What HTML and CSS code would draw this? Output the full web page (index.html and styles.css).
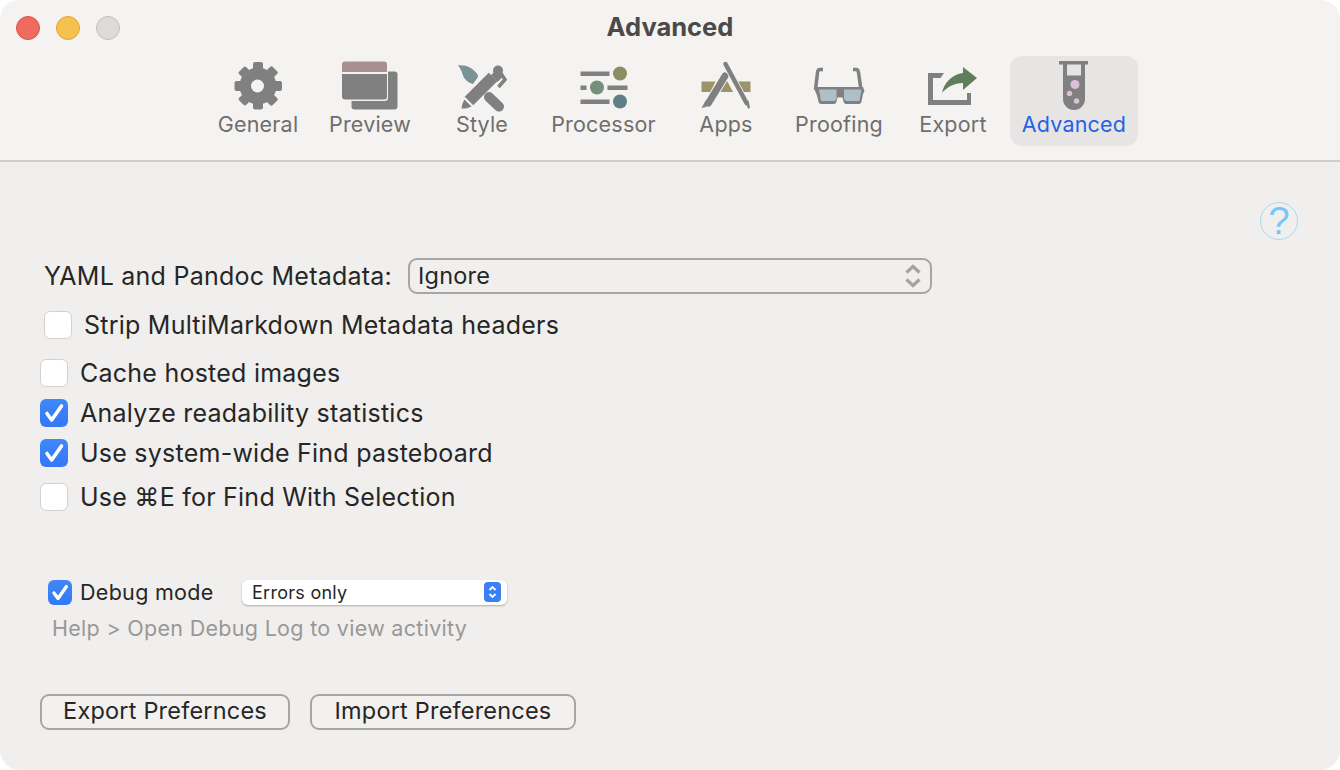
FILE: index.html
```html
<!DOCTYPE html>
<html lang="en">
<head>
<meta charset="utf-8">
<title>Advanced</title>
<link rel="stylesheet" href="styles.css">
</head>
<body>
<div class="window">
  <header class="toolbar">
    <div class="titlebar">
      <div class="lights">
        <span class="light red"></span><span class="light yellow"></span><span class="light grey"></span>
      </div>
      <h1 class="title">Advanced</h1>
    </div>
    <nav class="tabs">
      <div class="tab w110">
        <svg class="icon" width="60" height="56" viewBox="228 58 60 56">
          <g fill="#808080">
            <rect x="253" y="62" width="10" height="47.500" rx="2"/>
            <rect x="253" y="62" width="10" height="47.500" rx="2" transform="rotate(45 258 86)"/>
            <rect x="253" y="62" width="10" height="47.500" rx="2" transform="rotate(90 258 86)"/>
            <rect x="253" y="62" width="10" height="47.500" rx="2" transform="rotate(135 258 86)"/>
            <circle cx="258" cy="86" r="18.500"/>
          </g>
          <circle cx="257.500" cy="86" r="6.500" fill="#f4f3f1"/>
        </svg>
        <span class="tab-label">General</span>
      </div>
      <div class="tab w114">
        <svg class="icon" width="60" height="56" viewBox="340 58 60 56">
          <rect x="351.500" y="71.500" width="46" height="38" rx="3" fill="#808080"/>
          <rect x="340.500" y="60.500" width="47.500" height="40.500" rx="3.500" fill="#f4f3f1"/>
          <path d="M342 72V64.500a3 3 0 0 1 3-3h39a3 3 0 0 1 3 3V72z" fill="#a89090"/>
          <path d="M342 74h45v22.500a3 3 0 0 1-3 3H345a3 3 0 0 1-3-3z" fill="#808080"/>
        </svg>
        <span class="tab-label">Preview</span>
      </div>
      <div class="tab w110">
        <svg class="icon" width="60" height="56" viewBox="452 58 60 56">
          <path d="M458 65c3 .8 6 0 9 1.200 4 1.600 7 3.800 9 6.300 1.500 1.800 2.300 3.300 2 4.500l-5 7c-3 -.8-6-2.300-8-5-2-2.500-2.300-4.500-3-6.500-.8-2.500-2.300-4.500-4-7.500z" fill="#7d9298"/>
          <path d="M489 97l10 9.500" stroke="#808080" stroke-width="10" stroke-linecap="round"/>
          <path d="M469 101l24-24" stroke="#808080" stroke-width="12"/>
          <path d="M461.500 108.500c.3-3.500 1.700-7 3-9l7 7c-2.800 1.500-6.500 2.300-10 2z" fill="#808080"/>
          <circle cx="498" cy="70.500" r="5" fill="#808080"/>
          <path d="M500 72l5 7.500-6.500 7.500" fill="none" stroke="#808080" stroke-width="3.500"/>
          <path d="M491 75l6-5.500 6.500 6.500-6 6z" fill="#808080"/>
        </svg>
        <span class="tab-label">Style</span>
      </div>
      <div class="tab w133">
        <svg class="icon" width="60" height="56" viewBox="574 58 60 56">
          <g fill="#808080">
            <rect x="580.500" y="71.500" width="29" height="4.500"/>
            <rect x="580.500" y="85.500" width="6" height="4.500"/>
            <rect x="607.500" y="85.500" width="20" height="4.500"/>
            <rect x="580.500" y="99.500" width="29" height="4.500"/>
          </g>
          <circle cx="620" cy="73.500" r="7" fill="#8a8f62"/>
          <circle cx="597" cy="87.500" r="7" fill="#74907a"/>
          <circle cx="620" cy="101.500" r="7" fill="#5f7f86"/>
        </svg>
        <span class="tab-label">Processor</span>
      </div>
      <div class="tab w112">
        <svg class="icon" width="60" height="56" viewBox="696 58 60 56">
          <path d="M701.500 81.500h14l-5 10.500h-9z" fill="#9a9468"/>
          <path d="M725.500 81.500h2l5.500 10.500h-13z" fill="#9a9468"/>
          <path d="M736 81.500h14.500V92H741z" fill="#9a9468"/>
          <path d="M725 76l-16.500 27" stroke="#f4f3f1" stroke-width="9" stroke-linecap="round"/>
          <path d="M725 76l-16.500 27" stroke="#808080" stroke-width="7" stroke-linecap="round"/>
          <path d="M725.500 64l21 39" stroke="#f4f3f1" stroke-width="6" stroke-linecap="round"/>
          <path d="M725.500 64l21 39" stroke="#808080" stroke-width="4.500" stroke-linecap="round"/>
          <path d="M706 100l5 3-5 4-4.500 1z" fill="#808080"/>
          <path d="M744.500 102l4-1.500 1.500 7-1.500 1.500z" fill="#808080"/>
        </svg>
        <span class="tab-label">Apps</span>
      </div>
      <div class="tab w114">
        <svg class="icon" width="60" height="56" viewBox="810 58 60 56">
          <path d="M824 69.500h-3c-1.500 0-2.200 1-2.500 3L816.500 90" fill="none" stroke="#808080" stroke-width="3.500"/>
          <path d="M854 69.500h3c1.500 0 2.200 1 2.500 3l2.500 17.500" fill="none" stroke="#808080" stroke-width="3.500"/>
          <path d="M817 87h47l1.500 4-1.500 3-1.500 7.500c-.3 1.500-1 2.500-2.500 2.500h-13c-1.500 0-2-1-2.500-2.500l-1-4h-5l-1 4c-.5 1.500-1 2.500-2.500 2.500h-13c-1.500 0-2.200-1-2.500-2.500L817.500 94l-1.500-3z" fill="#808080"/>
          <path d="M820 89.500h17.500v9.500l-2 2h-13.500zM845 89.500h17.500l-2 11.500h-13.500l-2-2z" fill="#aebfc7"/>
        </svg>
        <span class="tab-label">Proofing</span>
      </div>
      <div class="tab w114">
        <svg class="icon" width="60" height="56" viewBox="923 58 60 56">
          <path d="M928 73h16l-3.500 5H933v22h34v-7h4v12h-43z" fill="#808080"/>
          <path d="M942 93c2-10 10-19 21-20V67l14 11-14 12v-7c-9 .3-16 4-21 10z" fill="#5f7f5c"/>
        </svg>
        <span class="tab-label">Export</span>
      </div>
      <div class="tab w128 active">
        <svg class="icon" width="60" height="56" viewBox="1044 58 60 56">
          <path d="M1059 61h29v3.500h-3V99a11 11 0 0 1-22 0V64.500h-4z" fill="#808080"/>
          <rect x="1067" y="64.500" width="14" height="11" fill="#e6e5e3"/>
          <circle cx="1075" cy="84.500" r="4.500" fill="#dcbedb"/>
          <circle cx="1069.500" cy="93.500" r="2.700" fill="#dcbedb"/>
          <circle cx="1076.500" cy="101" r="2.800" fill="#dcbedb"/>
        </svg>
        <span class="tab-label">Advanced</span>
      </div>
    </nav>
  </header>
  <main class="content">
    <div class="help-row"><span class="help">?</span></div>
    <div class="yaml-row">
      <span class="label">YAML and Pandoc Metadata:</span>
      <div class="select">
        <span>Ignore</span>
        <svg width="16" height="24" viewBox="0 0 16 24"><path d="M1.500 8.500L8 2.500l6.500 6M1.500 15.500L8 21.500l6.500-6" fill="none" stroke="#a5a3a1" stroke-width="3.200"/></svg>
      </div>
    </div>
    <div class="check-row strip"><span class="box"></span><span class="label">Strip MultiMarkdown Metadata headers</span></div>
    <div class="check-row cache"><span class="box"></span><span class="label">Cache hosted images</span></div>
    <div class="check-row analyze"><span class="box on"><svg width="28" height="28" viewBox="0 0 28 28"><path d="M7 14.500L11.700 21 21.500 7" fill="none" stroke="#fff" stroke-width="3.600" stroke-linecap="round" stroke-linejoin="round"/></svg></span><span class="label">Analyze readability statistics</span></div>
    <div class="check-row find"><span class="box on"><svg width="28" height="28" viewBox="0 0 28 28"><path d="M7 14.500L11.700 21 21.500 7" fill="none" stroke="#fff" stroke-width="3.600" stroke-linecap="round" stroke-linejoin="round"/></svg></span><span class="label">Use system-wide Find pasteboard</span></div>
    <div class="check-row cmd"><span class="box"></span><span class="label">Use ⌘E for Find With Selection</span></div>
    <div class="debug-row">
      <span class="box on small"><svg width="24" height="25" viewBox="0 0 28 28"><path d="M7 14.500L11.700 21 21.500 7" fill="none" stroke="#fff" stroke-width="3.800" stroke-linecap="round" stroke-linejoin="round"/></svg></span>
      <span class="debug-label">Debug mode</span>
      <div class="popup">
        <span>Errors only</span>
        <span class="stepper"><svg width="17" height="20" viewBox="0 0 17 20"><path d="M5.500 8l3-3 3 3M5.500 12l3 3 3-3" fill="none" stroke="#fff" stroke-width="1.800"/></svg></span>
      </div>
    </div>
    <p class="hint">Help &gt; Open Debug Log to view activity</p>
    <div class="buttons">
      <button class="btn export" type="button">Export Prefernces</button>
      <button class="btn import" type="button">Import Preferences</button>
    </div>
  </main>
</div>
</body>
</html>
```
FILE: styles.css
```css
* { box-sizing: border-box; }
html, body { margin: 0; height: 100%; background: #fff; }
body { width: 1340px; height: 770px; overflow: hidden; font-family: "Inter", "DejaVu Sans", sans-serif; color: #262626; }
.window { width: 1340px; height: 770px; border-radius: 20px; overflow: hidden; background: #f0efed; display: flex; flex-direction: column; }

.toolbar { height: 162px; flex: none; background: #f4f3f1; border-bottom: 2px solid #cfcecc; display: flex; flex-direction: column; }
.titlebar { height: 56px; flex: none; display: flex; align-items: center; padding: 0 16px 0 16px; position: relative; }
.lights { display: flex; gap: 16px; }
.light { width: 24px; height: 24px; border-radius: 50%; border: 1px solid; }
.red { background: #f06a5f; border-color: #d9534a; }
.yellow { background: #f6c04e; border-color: #dfa33a; }
.grey { background: #dcdbd9; border-color: #c0bfbd; }
.title { position: absolute; left: 0; right: 0; top: 12px; margin: 0; text-align: center; font-size: 25.500px; line-height: 30px; font-weight: 700; color: #4b4a49; }

.tabs { display: flex; justify-content: center; padding-left: 1px; }
.tab { height: 90px; display: flex; flex-direction: column; align-items: center; padding-top: 2px; border-radius: 12px; }
.w110 { width: 110px; }
.w112 { width: 112px; }
.w114 { width: 114px; }
.w128 { width: 128px; }
.w133 { width: 133px; }
.icon { display: block; flex: none; }
.tab-label { font-size: 21.500px; line-height: 26px; letter-spacing: .2px; color: #6f6e6d; margin-top: -3px; white-space: nowrap; }
.active { background: #e6e5e3; }
.active .tab-label { color: #2461e6; }

.content { flex: 1; display: flex; flex-direction: column; padding: 0 0 0 40px; }
.help-row { display: flex; justify-content: flex-end; padding: 40px 42px 0 0; }
.help { width: 38px; height: 38px; border-radius: 50%; border: 1px solid #a6d9f8; color: #76c6fb; font-family: "Liberation Sans", sans-serif; font-size: 38px; line-height: 36px; text-align: center; }
.label { font-size: 25px; line-height: 30px; letter-spacing: .24px; color: #262626; white-space: nowrap; }

.yaml-row { display: flex; align-items: center; gap: 16px; margin: 18px 0 0 4px; height: 36px; }
.select { width: 524px; height: 36px; border: 2px solid #a8a6a4; border-radius: 9px; display: flex; align-items: center; justify-content: space-between; padding: 0 9px 1px 8px; font-size: 23.500px; letter-spacing: .2px; }
.select svg { display: block; }

.check-row { display: flex; align-items: center; gap: 12px; height: 28px; }
.strip { margin: 17px 0 0 4px; }
.cache { margin-top: 20px; }
.analyze { margin-top: 12px; }
.find { margin-top: 12px; }
.cmd { margin-top: 16px; }
.box { width: 28px; height: 28px; flex: none; border-radius: 6px; background: #fff; border: 1px solid #d2d1cf; display: block; }
.box.on { background: linear-gradient(#4087f7, #3478f6); border: none; }
.box svg { display: block; }
.box.small { width: 24px; height: 25px; }

.debug-row { display: flex; align-items: center; margin: 68px 0 0 8px; height: 26px; }
.debug-label { font-size: 21.500px; letter-spacing: .3px; margin-left: 8px; color: #262626; width: 162px; white-space: nowrap; }
.popup { width: 265px; height: 25px; background: #fff; border-radius: 6px; box-shadow: 0 1px 2px rgba(0,0,0,.28); display: flex; align-items: center; justify-content: space-between; padding: 0 6px 0 10px; font-size: 18px; letter-spacing: .27px; }
.stepper { width: 17px; height: 20px; border-radius: 4px; background: #3a7ff5; display: block; }
.stepper svg { display: block; }
.hint { margin: 10px 0 0 12px; font-size: 21.500px; line-height: 26px; letter-spacing: .3px; color: #999897; }

.buttons { display: flex; gap: 20px; margin-top: 53px; }
.btn { height: 36px; border: 2px solid #a8a6a4; border-radius: 9px; background: #f2f1ef; font-family: inherit; font-size: 23.500px; line-height: 30px; letter-spacing: .2px; color: #262626; padding: 0 0 2px; }
.export { width: 250px; }
.import { width: 266px; }
```
